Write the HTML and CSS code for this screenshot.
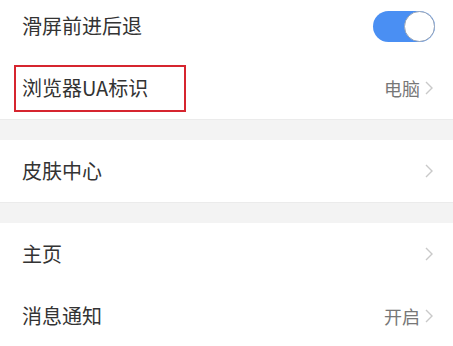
FILE: index.html
```html
<!DOCTYPE html>
<html lang="zh-CN">
<head>
<meta charset="utf-8">
<link rel="stylesheet" href="styles.css">
</head>
<body>
<div class="page">
  <div class="group">
    <div class="row">
      <span class="label">滑屏前进后退</span>
      <span class="toggle on"><span class="knob"></span></span>
    </div>
    <div class="row">
      <span class="label boxed">浏览器UA标识</span>
      <span class="value">电脑<svg class="chev" viewBox="0 0 8 14" width="8" height="14"><polyline points="1,1 7,7 1,13" fill="none" stroke="#c9c9c9" stroke-width="1.4"/></svg></span>
    </div>
  </div>
  <div class="gap"></div>
  <div class="group">
    <div class="row">
      <span class="label">皮肤中心</span>
      <span class="value"><svg class="chev" viewBox="0 0 8 14" width="8" height="14"><polyline points="1,1 7,7 1,13" fill="none" stroke="#c9c9c9" stroke-width="1.4"/></svg></span>
    </div>
  </div>
  <div class="gap"></div>
  <div class="group">
    <div class="row">
      <span class="label">主页</span>
      <span class="value"><svg class="chev" viewBox="0 0 8 14" width="8" height="14"><polyline points="1,1 7,7 1,13" fill="none" stroke="#c9c9c9" stroke-width="1.4"/></svg></span>
    </div>
    <div class="row">
      <span class="label">消息通知</span>
      <span class="value">开启<svg class="chev" viewBox="0 0 8 14" width="8" height="14"><polyline points="1,1 7,7 1,13" fill="none" stroke="#c9c9c9" stroke-width="1.4"/></svg></span>
    </div>
  </div>
</div>
</body>
</html>
```

FILE: styles.css
```css
html, body {
  margin: 0;
  padding: 0;
  background: #ffffff;
}
body {
  font-family: "Noto Sans CJK SC", "Noto Sans", sans-serif;
  width: 453px;
  height: 346px;
  overflow: hidden;
}
.page {
  margin-top: -5px;
}
.group {
  background: #ffffff;
}
.row {
  height: 62px;
  display: flex;
  align-items: center;
  justify-content: space-between;
  padding: 0 20px 0 22px;
  box-sizing: border-box;
}
.label {
  font-size: 20px;
  color: #333333;
  line-height: 1;
}
.boxed {
  display: flex;
  align-items: center;
  box-sizing: border-box;
  height: 47px;
  margin-left: -8px;
  padding: 0 36px 0 6px;
  border: 2px solid #d6252f;
}
.value {
  display: flex;
  align-items: center;
  font-size: 18px;
  color: #777777;
  line-height: 1;
}
.chev {
  margin-left: 5px;
  display: block;
}
.toggle {
  width: 62px;
  height: 31px;
  border-radius: 16px;
  background: #4a8ff3;
  display: flex;
  align-items: center;
  justify-content: flex-end;
  margin-right: -2px;
}
.knob {
  width: 31px;
  height: 31px;
  border-radius: 50%;
  background: #ffffff;
  border: 1px solid #9aa6b8;
  box-sizing: border-box;
}
.gap {
  height: 21px;
  background: #f3f3f3;
  border-top: 1px solid #ebebeb;
  box-sizing: border-box;
}
```
